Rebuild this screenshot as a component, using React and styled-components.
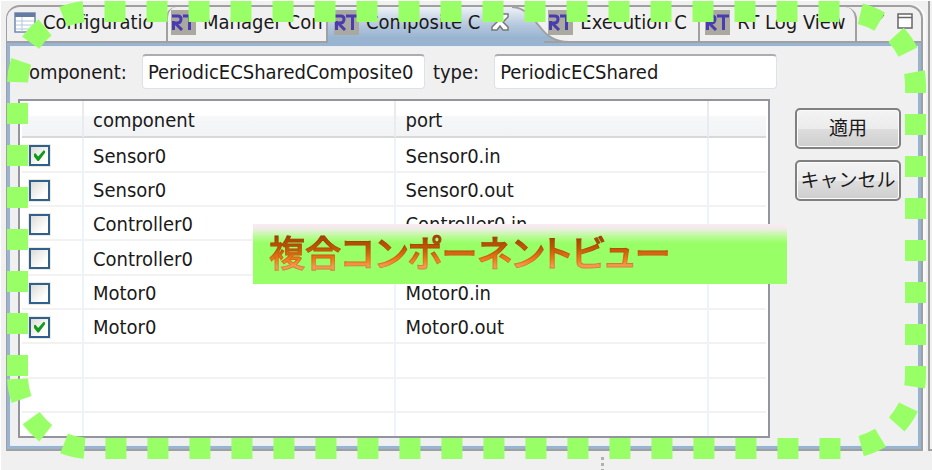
import React, { useState } from "react";
import styled, { createGlobalStyle, css } from "styled-components";

const UI_FONT = '"DejaVu Sans Condensed", "Noto Sans", "Noto Sans CJK JP", sans-serif';
const GREEN = "#99ff66";
const BLUE = "#99b4d1";
const LINE = "#a0a0a0";

const GlobalStyle = createGlobalStyle`
  *, *::before, *::after { box-sizing: border-box; }
  body { margin: 0; background: #f0f0f0; overflow: hidden; }
  button, input, table { font: inherit; color: inherit; }
`;

const Page = styled.div`
  position: relative;
  min-height: 100vh;
  padding-top: 4px;
  border-top: 1px solid #fff;
  border-left: 1px solid #fff;
  background: #f0f0f0;
  color: #1a1a1a;
  font: 20px/24px ${UI_FONT};
`;

const Workbench = styled.div`
  display: flex;
  gap: 5px;
  padding-left: 5px;
`;

const ViewPanel = styled.section`
  flex: 1;
  min-width: 0;
  border: 2px solid ${LINE};
  border-left-width: 1px;
  border-radius: 14px 14px 0 0;
  box-shadow: 3px 0 0 #f8f8f8;
`;

const NeighbourPanel = styled.div`
  width: 4px;
  margin-top: -4px;
  border: solid ${LINE};
  border-width: 0 0 2px 2px;
`;

const TabBar = styled.nav`
  display: flex;
  height: 36px;
`;

const Tab = styled.button`
  display: flex;
  align-items: center;
  gap: 7px;
  flex: 0 0 ${(p) => p.$width}px;
  padding: 0 0 4px ${(p) => p.$indent}px;
  border: 0 solid ${LINE};
  border-bottom-width: 2px;
  background: none;
  white-space: nowrap;
  text-align: left;
  ${(p) => p.$edge === "left" && css`
    border-left-width: 2px;
    border-top-left-radius: 10px;
    border-right-width: 2px;
  `}
  ${(p) => p.$edge === "right" && css`
    border-left-width: 2px;
    border-right-width: 2px;
    border-top-right-radius: 12px;
  `}
  ${(p) => p.$active && css`
    border-bottom: 0;
    padding-bottom: 6px;
    background: linear-gradient(#eef2f7, #b5c8dd 50%, ${BLUE} 85%);
  `}
`;

const TabCurve = styled.svg`
  flex: 0 0 60px;
  height: 36px;
  margin-right: -25px;
`;

const TabTools = styled.div`
  flex: 1;
  display: flex;
  justify-content: flex-end;
  align-items: flex-start;
  gap: 12px;
  padding: 6px 8px 0 0;
  border-bottom: 2px solid ${LINE};
`;

const ToolButton = styled.button`
  display: block;
  padding: 0;
  border: 0;
  background: none;
  line-height: 0;
`;

const CloseIcon = styled.svg`
  flex: none;
  margin-left: 4px;
`;

const ViewBody = styled.div`
  padding: 8px 17px 8px 8px;
  border: 3px solid ${BLUE};
  box-shadow: inset 0 0 0 1px #e6eef6;
`;

const PropertyRow = styled.div`
  display: flex;
  align-items: center;
  gap: 8px;
  margin-bottom: 10px;
  padding-left: 1px;
`;

const Field = styled.label`
  display: flex;
  align-items: center;
  gap: 15px;
`;

const TextBox = styled.input`
  width: 283px;
  height: 35px;
  padding: 0 5px;
  border: 1px solid #dbe3ea;
  border-top: 2px solid #abadb3;
  border-radius: 4px;
  background: #fff;
`;

const Content = styled.div`
  display: flex;
  align-items: flex-start;
  gap: 25px;
`;

const TableFrame = styled.div`
  flex: 1;
  min-width: 0;
  padding: 0 2px;
  border: 2px solid #92959d;
  background: #fff;
`;

const PortTable = styled.table`
  width: 100%;
  table-layout: fixed;
  border-collapse: separate;
  border-spacing: 0;
`;

const HeadCell = styled.th`
  width: ${(p) => p.$width || "auto"};
  height: 37px;
  padding: 2px 8px 0 9px;
  border-right: ${(p) => (p.$last ? 0 : 2)}px solid #e9ebee;
  border-bottom: 2px solid #d8d8d8;
  background: linear-gradient(#fff 40%, #f6f7f9 45%, #f2f3f5);
  font-weight: normal;
  text-align: left;
`;

const Row = styled.tr`
  height: 34px;
  &:nth-child(3n + 1) { height: 35px; }
  &:last-child { height: 23px; }
  &:last-child td { border-bottom: 0; }
`;

const Cell = styled.td`
  padding: 2px 8px 0 9px;
  border-right: ${(p) => (p.$last ? 0 : 2)}px solid #ebf3fb;
  border-bottom: 2px solid #f2f2f2;
  white-space: nowrap;
`;

const CheckCell = styled(Cell)`
  padding: 2px 0 0 7px;
`;

const CheckBox = styled.input`
  appearance: none;
  display: block;
  position: relative;
  width: 21px;
  height: 21px;
  margin: 0;
  border: 2px solid #2f6190;
  background: linear-gradient(135deg, #dcdbd5, #fff 75%);
  box-shadow: 0 0 0 1px #eeeadb;
  &:checked::before {
    content: "";
    position: absolute;
    inset: 3px;
    background: #129a1b;
    clip-path: polygon(0 34%, 14% 30%, 38% 58%, 88% 2%, 100% 8%, 100% 26%, 44% 100%, 32% 100%, 0 60%);
  }
`;

const Actions = styled.div`
  display: flex;
  flex-direction: column;
  flex: 0 0 106px;
  gap: 11px;
  padding-top: 9px;
`;

const ActionButton = styled.button`
  height: 41px;
  padding: 0 0 4px;
  border: 2px solid #808080;
  border-radius: 5px;
  background: linear-gradient(#f3f3f3, #ececec 50%, #dddddd 52%, #cecece);
  box-shadow: inset 0 0 0 1px #fbfbfb;
  font: 19px/24px "Noto Sans CJK JP", sans-serif;
  white-space: nowrap;
`;

const Sash = styled.div`
  width: 3px;
  height: 15px;
  margin: 4px 0 0 600px;
  background: repeating-linear-gradient(transparent 0 2px, #b0b0b0 2px 5px, transparent 5px 6px);
`;

const Callout = styled.div`
  position: absolute;
  left: 252px;
  top: 223px;
  width: 534px;
  height: 60px;
  padding-left: 16px;
  background: linear-gradient(#ffe8fa, #e6f0da 10%, #b8fb94 21%, ${GREEN} 32%);
`;

const CalloutText = styled.strong`
  display: inline-block;
  background: linear-gradient(#a84300 24%, #c45606 45%, #f57c1a 66%, #f79a50 78%);
  background-clip: text;
  color: transparent;
  font: 500 36px/54px "Noto Sans CJK JP", sans-serif;
  font-feature-settings: "palt";
  -webkit-text-stroke: 1px rgba(110, 60, 20, 0.25);
  white-space: nowrap;
`;

const Highlight = styled.svg`
  position: absolute;
  left: -1px;
  top: -1px;
  width: calc(100% + 1px);
  pointer-events: none;
`;

function RtIcon() {
  return (
    <svg width="25" height="25" viewBox="0 0 25 25" aria-hidden="true">
      <rect width="25" height="25" fill="#aaa9a0" />
      <g fill="none" stroke="#4b3bb0" strokeWidth="3">
        <path d="M1 6H7Q10 6 10 9Q10 13 6 13H4M4 13L11 20M2.500 11V20" />
        <path d="M12 6H24M18.500 6V20" />
      </g>
    </svg>
  );
}

function TableIcon() {
  return (
    <svg width="22" height="21" viewBox="0 0 22 21" aria-hidden="true">
      <rect x="1" y="1" width="20" height="19" fill="#fff" stroke="#7088ab" strokeWidth="1.500" />
      <path d="M1 3H21" stroke="#647ca3" strokeWidth="4" />
      <path d="M2 9H20M2 13H20M2 17H20M8 5V20" stroke="#b5c6dc" strokeWidth="1" />
    </svg>
  );
}

const ROWS = [
  ["Sensor0", "Sensor0.in", true],
  ["Sensor0", "Sensor0.out", false],
  ["Controller0", "Controller0.in", false],
  ["Controller0", "Controller0.out", false],
  ["Motor0", "Motor0.in", false],
  ["Motor0", "Motor0.out", true],
];

export default function App() {
  const [checks, setChecks] = useState(ROWS.map((r) => r[2]));
  const toggle = (i) => setChecks(checks.map((c, n) => (n === i ? !c : c)));

  return (
    <>
      <GlobalStyle />
      <Page>
        <Workbench>
          <ViewPanel>
            <TabBar>
              <Tab $width={159} $indent={7}><TableIcon />Configuratio</Tab>
              <Tab $width={162} $indent={3} $edge="left"><RtIcon />Manager Con</Tab>
              <Tab $width={172} $indent={6} $active>
                <RtIcon />Composite C
                <CloseIcon width="18" height="18" viewBox="0 0 18 18" aria-hidden="true">
                  <path d="M1 1H6L9 5L12 1H17V4L12 9L17 14V17H12L9 13L6 17H1V14L6 9L1 4Z" fill="#fff" stroke="#777" strokeWidth="1.500" />
                </CloseIcon>
              </Tab>
              <TabCurve viewBox="0 0 60 36" aria-hidden="true">
                <defs>
                  <linearGradient id="tabFill" x2="0" y2="1">
                    <stop offset="0" stopColor="#eef2f7" />
                    <stop offset=".5" stopColor="#b5c8dd" />
                    <stop offset=".85" stopColor={BLUE} />
                  </linearGradient>
                </defs>
                <path d="M0 0H3C18 1 24 12 31 20C38 29 46 35 60 35V36H0Z" fill="url(#tabFill)" />
                <path d="M3 0C18 1 24 12 31 20C38 29 46 35 60 35" fill="none" stroke={LINE} strokeWidth="2" />
              </TabCurve>
              <Tab $width={154} $indent={4}><RtIcon />Execution C</Tab>
              <Tab $width={159} $indent={5} $edge="right"><RtIcon />RT Log View</Tab>
              <TabTools>
                <ToolButton aria-label="View menu">
                  <svg width="12" height="10" viewBox="0 0 12 10"><path d="M1 2H11L6 8Z" fill="#fff" stroke="#555" /></svg>
                </ToolButton>
                <ToolButton aria-label="Maximize">
                  <svg width="16" height="16" viewBox="0 0 16 16">
                    <rect x="1" y="1" width="14" height="14" fill="#fff" stroke="#666" strokeWidth="1.500" />
                    <path d="M1 4.500H15" stroke="#666" strokeWidth="1.500" />
                  </svg>
                </ToolButton>
              </TabTools>
            </TabBar>
            <ViewBody>
              <PropertyRow>
                <Field>component:<TextBox defaultValue="PeriodicECSharedComposite0" /></Field>
                <Field>type:<TextBox defaultValue="PeriodicECShared" /></Field>
              </PropertyRow>
              <Content>
                <TableFrame>
                  <PortTable>
                    <thead>
                      <tr>
                        <HeadCell $width="62px" aria-label="selected" />
                        <HeadCell $width="42%">component</HeadCell>
                        <HeadCell $width="42%">port</HeadCell>
                        <HeadCell $last />
                      </tr>
                    </thead>
                    <tbody>
                      {ROWS.map(([component, port], i) => (
                        <Row key={port}>
                          <CheckCell>
                            <CheckBox type="checkbox" aria-label={port} checked={checks[i]} onChange={() => toggle(i)} />
                          </CheckCell>
                          <Cell>{component}</Cell>
                          <Cell>{port}</Cell>
                          <Cell $last />
                        </Row>
                      ))}
                      {[0, 1, 2].map((n) => (
                        <Row key={n}><Cell /><Cell /><Cell /><Cell $last /></Row>
                      ))}
                    </tbody>
                  </PortTable>
                </TableFrame>
                <Actions>
                  <ActionButton>適用</ActionButton>
                  <ActionButton>キャンセル</ActionButton>
                </Actions>
              </Content>
            </ViewBody>
          </ViewPanel>
          <NeighbourPanel />
        </Workbench>
        <Sash />
        <Callout><CalloutText>複合コンポーネントビュー</CalloutText></Callout>
        <Highlight viewBox="0 0 932 470" aria-hidden="true">
          <path
            d="M17.500 376V84.500A73 73 0 0 1 90.500 11.500H842.500A73 73 0 0 1 915.500 84.500V375.500A73 73 0 0 1 842.500 448.500H90.500A73 73 0 0 1 17.500 376"
            fill="none"
            stroke={GREEN}
            strokeWidth="21"
            strokeDasharray="21 21"
          />
        </Highlight>
      </Page>
    </>
  );
}
